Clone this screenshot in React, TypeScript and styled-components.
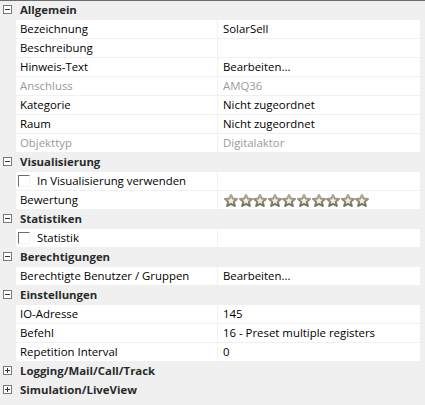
import styled, { createGlobalStyle } from 'styled-components';

const GlobalStyle = createGlobalStyle`
  html, body {
    margin: 0;
    padding: 0;
    background: #f0f0f0;
  }
  body {
    font-family: "Open Sans", "Noto Sans", "Liberation Sans", sans-serif;
    font-size: 11.4px;
  }
`;

const Grid = styled.div`
  width: 425px;
  height: 405px;
  box-sizing: border-box;
  border-top: 1px solid #6d6d6d;
  background: #f0f0f0;
  display: flex;
  flex-direction: column;
  gap: 1px;
  overflow: hidden;
`;

const CategoryRow = styled.div`
  height: 18px;
  display: flex;
  align-items: center;
  gap: 8px;
  padding-left: 3px;
  padding-bottom: 1px;
  box-sizing: border-box;
  font-weight: 700;
  color: #2a2a2a;
  cursor: default;
`;

const ToggleBox = styled.span`
  width: 7px;
  height: 7px;
  border: 1px solid #7a7a7a;
  background: #fff;
  position: relative;
  flex: none;

  &::before {
    content: '';
    position: absolute;
    left: 1px;
    right: 1px;
    top: 3px;
    height: 1px;
    background: #333;
  }

  &::after {
    content: '';
    display: ${(p: { open: boolean }) => (p.open ? 'none' : 'block')};
    position: absolute;
    top: 1px;
    bottom: 1px;
    left: 3px;
    width: 1px;
    background: #333;
  }
`;

const PropRow = styled.div`
  height: 18px;
  margin-left: 16px;
  width: 404px;
  display: grid;
  grid-template-columns: 201px 1fr;
  background: #fff;
  color: ${(p: { disabled?: boolean }) => (p.disabled ? '#9a9a9a' : '#000')};
`;

const LabelCell = styled.div`
  display: flex;
  align-items: center;
  gap: 7px;
  padding-left: 4px;
  padding-bottom: 1px;
  white-space: nowrap;
  overflow: hidden;
`;

const ValueCell = styled.div`
  display: flex;
  align-items: center;
  padding-left: 5px;
  padding-bottom: 1px;
  border-left: 1px solid #f0f0f0;
  white-space: nowrap;
  overflow: hidden;
`;

const CheckBox = styled.span`
  width: 12px;
  height: 12px;
  margin-left: -2px;
  margin-top: 1px;
  box-sizing: border-box;
  border-top: 1px solid #6e6e6e;
  border-left: 1px solid #6e6e6e;
  border-right: 1px solid #f4f4f4;
  border-bottom: 1px solid #f4f4f4;
  background: #fff;
  flex: none;
`;

const Stars = styled.div`
  display: flex;
  margin-left: 1px;
  margin-top: 1px;
`;

const Star = () => (
  <svg width="14.6" height="13" viewBox="0 0 14.6 13">
    <defs>
      <linearGradient id="sg" x1="0" y1="0" x2="0" y2="1">
        <stop offset="0" stopColor="#b3ac98" />
        <stop offset="1" stopColor="#746d5a" />
      </linearGradient>
    </defs>
    <polygon
      points="7,0.8 8.8,4.6 13,5 9.8,7.8 10.8,12 7,9.8 3.2,12 4.2,7.8 1,5 5.2,4.6"
      fill="#efece3"
      stroke="url(#sg)"
      strokeWidth="2"
      strokeLinejoin="round"
    />
  </svg>
);

type Prop = {
  label: string;
  value?: string;
  disabled?: boolean;
  check?: boolean;
  stars?: boolean;
};

type Section = { title: string; open: boolean; props: Prop[] };

const sections: Section[] = [
  {
    title: 'Allgemein',
    open: true,
    props: [
      { label: 'Bezeichnung', value: 'SolarSell' },
      { label: 'Beschreibung', value: '' },
      { label: 'Hinweis-Text', value: 'Bearbeiten...' },
      { label: 'Anschluss', value: 'AMQ36', disabled: true },
      { label: 'Kategorie', value: 'Nicht zugeordnet' },
      { label: 'Raum', value: 'Nicht zugeordnet' },
      { label: 'Objekttyp', value: 'Digitalaktor', disabled: true },
    ],
  },
  {
    title: 'Visualisierung',
    open: true,
    props: [
      { label: 'In Visualisierung verwenden', check: true },
      { label: 'Bewertung', stars: true },
    ],
  },
  {
    title: 'Statistiken',
    open: true,
    props: [{ label: 'Statistik', check: true }],
  },
  {
    title: 'Berechtigungen',
    open: true,
    props: [{ label: 'Berechtigte Benutzer / Gruppen', value: 'Bearbeiten...' }],
  },
  {
    title: 'Einstellungen',
    open: true,
    props: [
      { label: 'IO-Adresse', value: '145' },
      { label: 'Befehl', value: '16 - Preset multiple registers' },
      { label: 'Repetition Interval', value: '0' },
    ],
  },
  { title: 'Logging/Mail/Call/Track', open: false, props: [] },
  { title: 'Simulation/LiveView', open: false, props: [] },
];

const PropertyGrid = () => (
  <Grid>
    {sections.map((s) => [
      <CategoryRow key={s.title}>
        <ToggleBox open={s.open} />
        {s.title}
      </CategoryRow>,
      ...s.props.map((p) => (
        <PropRow key={s.title + p.label} disabled={p.disabled}>
          <LabelCell>
            {p.check && <CheckBox />}
            {p.label}
          </LabelCell>
          <ValueCell>
            {p.stars ? (
              <Stars>
                {Array.from({ length: 10 }, (_, i) => (
                  <Star key={i} />
                ))}
              </Stars>
            ) : (
              p.value
            )}
          </ValueCell>
        </PropRow>
      )),
    ])}
  </Grid>
);

const App = () => (
  <>
    <GlobalStyle />
    <PropertyGrid />
  </>
);

export default App;
